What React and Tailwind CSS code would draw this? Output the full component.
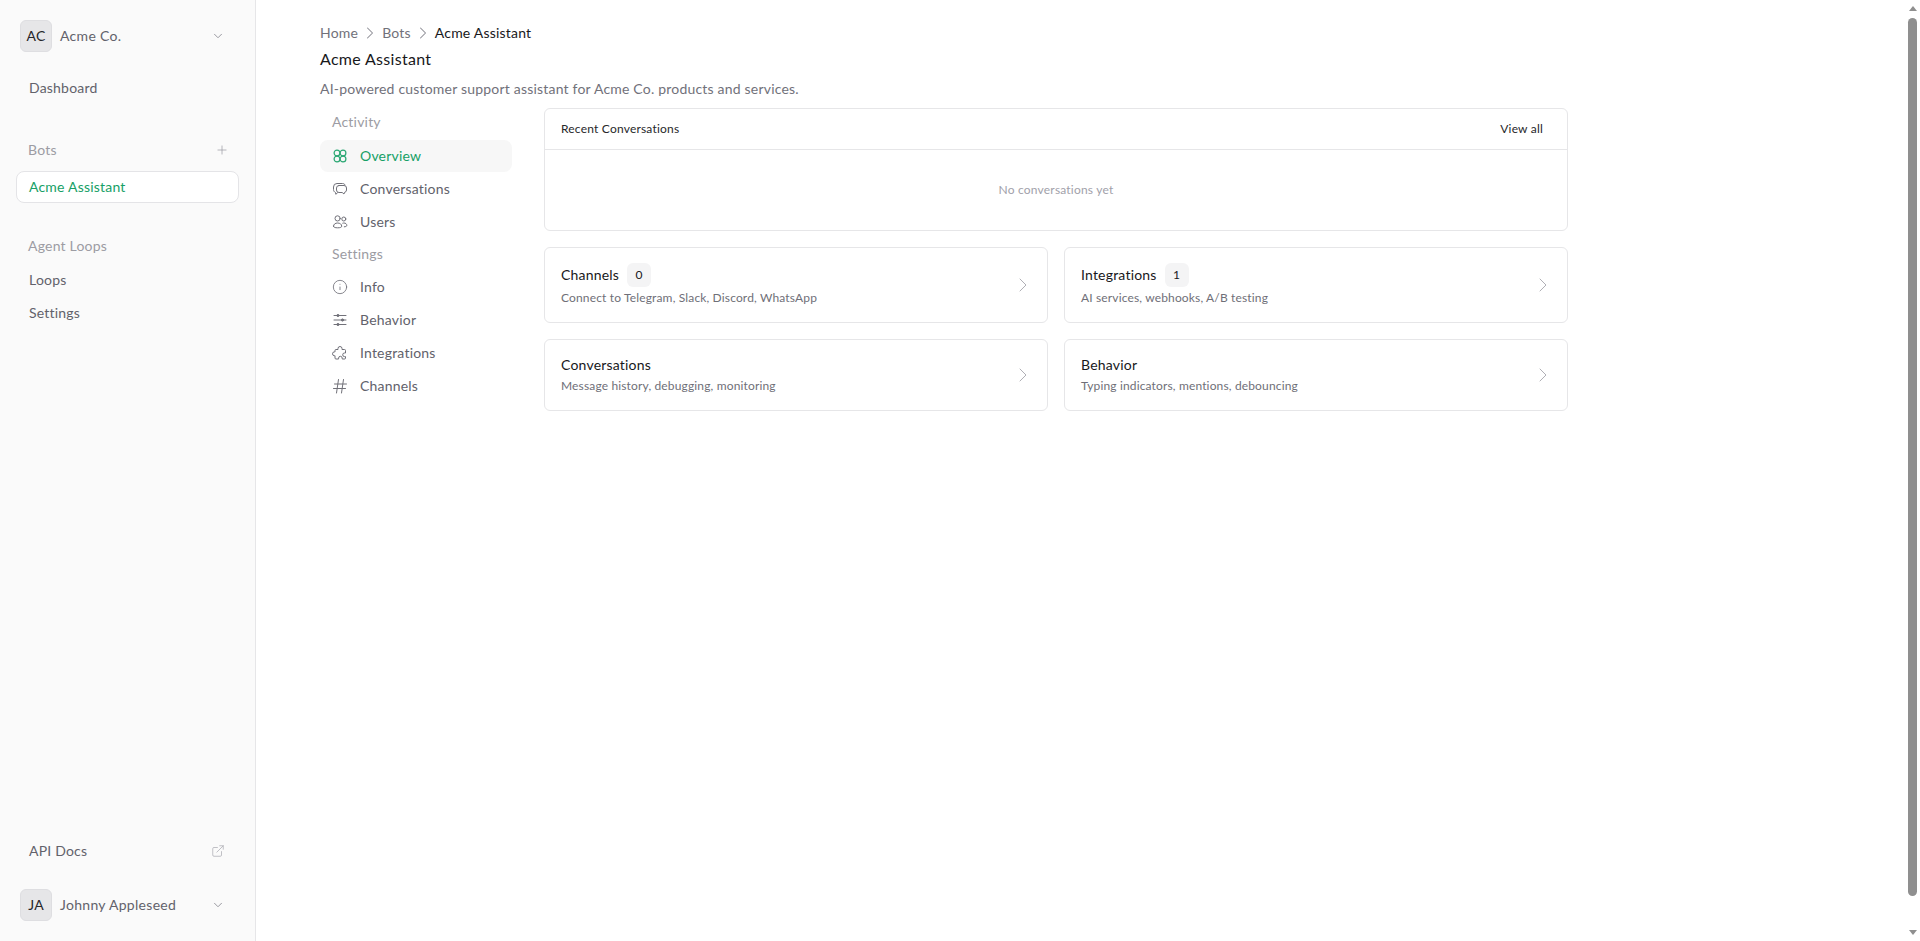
import React from 'react'
import { ChevronDown, ChevronRight, ExternalLink, Info, Plus } from 'lucide-react'

const OverviewIcon = (props) => (
  <svg viewBox="0 0 16 16" fill="none" stroke="currentColor" {...props} strokeWidth="1.2">
    <circle cx="5" cy="5" r="2.9" />
    <circle cx="11" cy="5" r="2.9" />
    <circle cx="5" cy="11" r="2.9" />
    <circle cx="11" cy="11" r="2.9" />
  </svg>
)

const MessagesIcon = (props) => (
  <svg viewBox="0 0 16 16" fill="none" stroke="currentColor" strokeLinecap="round" strokeLinejoin="round" {...props} strokeWidth="1">
    <path d="M7 4.5h5a2.5 2.5 0 0 1 2.5 2.5v2a2.5 2.5 0 0 1-2 2.4l-.5 1.6-1.8-1.5H7A2.5 2.5 0 0 1 4.5 9V7A2.5 2.5 0 0 1 7 4.5z" />
    <path d="M13 3.8c-.5-.9-1.4-1.3-2.5-1.3H5A3.5 3.5 0 0 0 1.5 6v2.5c0 1.4.8 2.5 2 3l.3 1.8 1.7-1.5" />
  </svg>
)

const UsersIcon = (props) => (
  <svg viewBox="0 0 16 16" fill="none" stroke="currentColor" strokeLinecap="round" {...props} strokeWidth="1">
    <circle cx="5.6" cy="4.4" r="2.6" />
    <circle cx="11.8" cy="5" r="2" />
    <path d="M1.5 12.2c0-2 1.8-3.2 4.1-3.2s4.1 1.2 4.1 3.2c0 1.2-1.6 1.6-4.1 1.6s-4.1-.4-4.1-1.6z" />
    <path d="M10.8 9.2c.3-.1.7-.2 1.1-.2 1.7 0 2.9 1 2.9 2.4 0 .9-.9 1.3-2.5 1.4" />
  </svg>
)

const SlidersIcon = (props) => (
  <svg viewBox="0 0 16 16" fill="none" stroke="currentColor" strokeLinecap="round" {...props} strokeWidth="1">
    <path d="M2 3.5h12M2 8h12M2 12.5h12" />
    <circle cx="6" cy="3.5" r="1.1" fill="currentColor" />
    <circle cx="10.5" cy="8" r="1.1" fill="currentColor" />
    <circle cx="6" cy="12.5" r="1.1" fill="currentColor" />
  </svg>
)

const PuzzleIcon = (props) => (
  <svg viewBox="0 0 16 16" fill="none" stroke="currentColor" strokeLinejoin="round" {...props} strokeWidth="1">
    <path d="M6 3.5a2 2 0 0 1 4 0v1h2.5a1 1 0 0 1 1 1V8h-1a1.8 1.8 0 0 0 0 3.6h1V13a1 1 0 0 1-1 1h-2.3v-.9a1.8 1.8 0 0 0-3.6 0v.9H4a1 1 0 0 1-1-1v-2.3h-.6a1.9 1.9 0 0 1 0-3.8H3V5.5a1 1 0 0 1 1-1h2z" />
  </svg>
)

const HashIcon = (props) => (
  <svg viewBox="0 0 16 16" fill="none" stroke="currentColor" strokeLinecap="round" {...props} strokeWidth="1">
    <path d="M2.5 6h12M1.5 10.5h12M6.5 1.5 4.5 15M11.5 1.5 9.5 15" />
  </svg>
)

const activity = [
  { label: 'Overview', icon: OverviewIcon, active: true },
  { label: 'Conversations', icon: MessagesIcon },
  { label: 'Users', icon: UsersIcon },
]

const settings = [
  { label: 'Info', icon: Info },
  { label: 'Behavior', icon: SlidersIcon },
  { label: 'Integrations', icon: PuzzleIcon },
  { label: 'Channels', icon: HashIcon },
]

const NavItem = ({ label, icon: Icon, active }) => (
  <a className={`flex h-8 items-center gap-3 rounded-lg px-3 text-sm ${active ? 'bg-[#f7f7f7] text-[#16a066]' : 'text-[#62626b]'}`}>
    <Icon className="h-4 w-4 shrink-0 opacity-90" strokeWidth={1.25} />
    <span className="pb-px">{label}</span>
  </a>
)

const SwitcherRow = ({ initials, name }) => (
  <div className="flex h-8 items-center pl-5 pr-[30px]">
    <div className="flex h-8 w-8 items-center justify-center rounded-md border border-[#dedee1] bg-[#e6e6e8] text-sm text-[#27272a]">
      {initials}
    </div>
    <span className="ml-2 flex-1 pb-px text-sm tracking-[0.3px] text-[#62626b]">{name}</span>
    <ChevronDown className="h-3.5 w-3.5 text-[#8c8c94]" strokeWidth={1.5} />
  </div>
)

const LinkCard = ({ title, count, description, tall }) => (
  <a className={`flex items-center justify-between rounded-md border border-[#e6e6e8] bg-white pl-4 pr-3 ${tall ? 'h-[76px]' : 'h-[72px]'}`}>
    <div className="pb-px">
      <div className={`flex items-center gap-2 text-sm text-[#18181b] ${count !== undefined ? 'h-6' : 'h-5'}`}>
        {title}
        {count !== undefined && (
          <span className="flex h-6 min-w-6 items-center justify-center rounded-md bg-[#f4f4f5] px-2 text-xs">{count}</span>
        )}
      </div>
      <p className="mt-[3px] text-xs leading-4 tracking-[0.15px] text-[#6f6f78]">{description}</p>
    </div>
    <ChevronRight className="h-6 w-6 text-[#b0b0b6]" strokeWidth={1} />
  </a>
)

export default function App() {
  return (
    <div className="flex min-h-[972px] bg-white font-['Lato',sans-serif] tracking-[0.2px]">
      {/* Sidebar */}
      <aside className="sticky top-0 flex h-screen w-64 shrink-0 flex-col border-r border-[#e6e6e8] bg-[#fafafa] pt-5 pb-5">
        <SwitcherRow initials="AC" name="Acme Co." />
        <a className="mt-[26px] pl-[29px] text-sm leading-5 text-[#62626b]">Dashboard</a>

        <div className="mt-[42px] flex h-5 items-center justify-between pl-7 pr-[26px] text-sm text-[#9c9ca3]">
          Bots
          <Plus className="h-3.5 w-3.5" strokeWidth={1.25} />
        </div>
        <a className="mx-4 mt-[11px] flex h-8 items-center rounded-lg border border-[#e4e4e7] bg-white pb-px pl-3 text-sm text-[#16a066]">
          Acme Assistant
        </a>

        <div className="mt-[33px] pl-7 text-sm leading-5 text-[#9c9ca3]">Agent Loops</div>
        <a className="mt-[14px] pl-[29px] text-sm leading-5 text-[#62626b]">Loops</a>
        <a className="mt-[13px] pl-[29px] text-sm leading-5 text-[#62626b]">Settings</a>

        <div className="mt-auto flex h-5 items-center justify-between pl-[29px] pr-[30px] text-sm text-[#62626b]">
          API Docs
          <ExternalLink className="h-3.5 w-3.5 text-[#a9a9b0]" strokeWidth={1.25} />
        </div>
        <div className="mt-7">
          <SwitcherRow initials="JA" name="Johnny Appleseed" />
        </div>
      </aside>

      {/* Main */}
      <main className="flex-1 pl-16 pt-[23px]">
        <div className="w-[1248px]">
          <nav className="flex h-5 items-center gap-[2px] text-sm text-[#71717a]">
            <span>Home</span>
            <ChevronRight className="h-5 w-5 text-[#8c8c94]" strokeWidth={1.25} />
            <span>Bots</span>
            <ChevronRight className="h-5 w-5 text-[#8c8c94]" strokeWidth={1.25} />
            <span className="text-[#18181b]">Acme Assistant</span>
          </nav>
          <h1 className="mt-[4px] text-base font-normal leading-6 tracking-[0.3px] text-[#18181b]">Acme Assistant</h1>
          <p className="mt-[8px] text-sm leading-5 text-[#71717a]">AI-powered customer support assistant for Acme Co. products and services.</p>

          <div className="mt-[9px] flex gap-8">
            <div className="flex w-48 shrink-0 flex-col gap-px">
              <div className="flex h-[31px] items-center px-3 pb-[3px] text-sm text-[#9c9ca3]">Activity</div>
              {activity.map((item) => <NavItem key={item.label} {...item} />)}
              <div className="flex h-[31px] items-center px-3 pb-[2px] text-sm text-[#9c9ca3]">Settings</div>
              {settings.map((item) => <NavItem key={item.label} {...item} />)}
            </div>

            <div className="flex-1">
              <section className="rounded-md border border-[#e6e6e8] bg-white">
                <div className="flex h-[41px] items-center justify-between border-b border-[#e6e6e8] pl-4 pr-6 text-xs text-[#27272a]">
                  <span>Recent Conversations</span>
                  <span>View all</span>
                </div>
                <div className="flex h-20 items-center justify-center text-xs text-[#a1a1aa]">No conversations yet</div>
              </section>
              <div className="mt-4 grid grid-cols-2 gap-4">
                <LinkCard tall title="Channels" count={0} description="Connect to Telegram, Slack, Discord, WhatsApp" />
                <LinkCard tall title="Integrations" count={1} description="AI services, webhooks, A/B testing" />
                <LinkCard title="Conversations" description="Message history, debugging, monitoring" />
                <LinkCard title="Behavior" description="Typing indicators, mentions, debouncing" />
              </div>
            </div>
          </div>
        </div>
      </main>

      {/* Browser scrollbar, the headless window draws none */}
      <div className="fixed inset-y-0 right-0 flex w-[15px] flex-col items-center bg-white">
        <svg viewBox="0 0 8 5" className="mt-[6px] h-[5px] w-[8px] text-[#8f8f8f]" fill="currentColor"><path d="M4 0l4 5H0z" /></svg>
        <div className="mt-[7px] h-[878px] w-[9px] rounded-full bg-[#8f8f8f]" />
        <svg viewBox="0 0 8 5" className="mt-auto mb-[6px] h-[5px] w-[8px] text-[#8f8f8f]" fill="currentColor"><path d="M0 0h8L4 5z" /></svg>
      </div>
    </div>
  )
}
